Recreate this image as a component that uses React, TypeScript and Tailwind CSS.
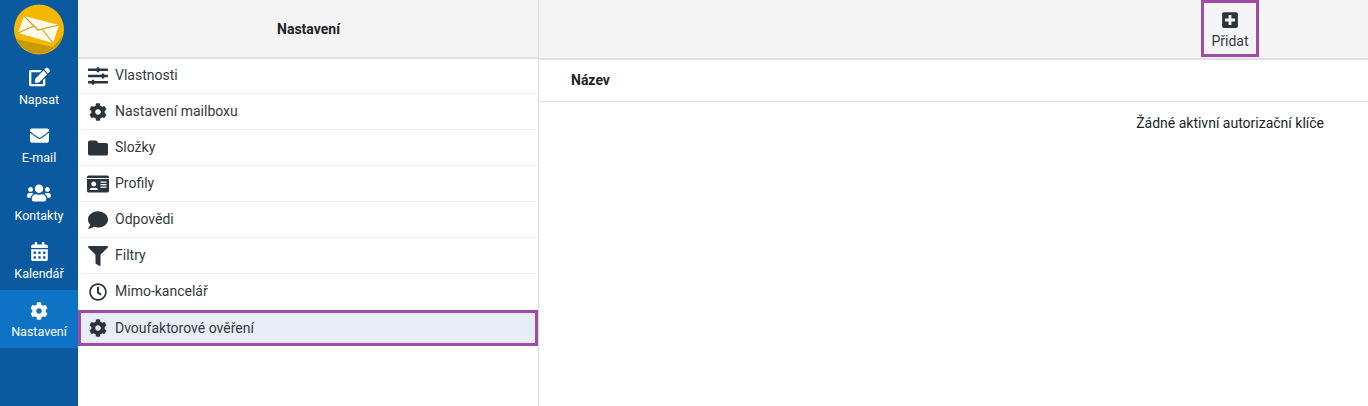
import React from "react";
import { FaEdit, FaEnvelope, FaUsers, FaCalendarAlt, FaCog, FaSlidersH, FaFolder, FaIdCard, FaComment, FaFilter, FaRegClock, FaPlusSquare } from "react-icons/fa";

const navItems = [
    { label: "Napsat", icon: FaEdit, iconClass: "h-[20px] w-[21px]" },
    { label: "E-mail", icon: FaEnvelope, iconClass: "h-[19px] w-[19px]" },
    { label: "Kontakty", icon: FaUsers, iconClass: "h-[24px] w-[24px]" },
    { label: "Kalendář", icon: FaCalendarAlt, iconClass: "h-[19px] w-[19px]" },
    { label: "Nastavení", icon: FaCog, iconClass: "mt-[3px] h-[18px] w-[18px]", active: true },
];

const sections = [
    { label: "Vlastnosti", icon: FaSlidersH, iconClass: "h-[20px] w-[20px]" },
    { label: "Nastavení mailboxu", icon: FaCog, iconClass: "h-[18px] w-[18px]" },
    { label: "Složky", icon: FaFolder, iconClass: "h-[20px] w-[20px]" },
    { label: "Profily", icon: FaIdCard, iconClass: "h-[20px] w-[22px]" },
    { label: "Odpovědi", icon: FaComment, iconClass: "h-[20px] w-[20px]" },
    { label: "Filtry", icon: FaFilter, iconClass: "h-[20px] w-[20px]" },
    { label: "Mimo-kancelář", icon: FaRegClock, iconClass: "h-[18px] w-[18px]" },
    { label: "Dvoufaktorové ověření", icon: FaCog, iconClass: "h-[18px] w-[18px]", active: true },
];

const Logo = () => (
    <svg width="50" height="51" viewBox="0 0 50 51">
        <circle cx="25" cy="25.5" r="25" fill="#f5b800" />
        <path d="M2 35 L39 43 L49 31 A25 25 0 0 1 2 35z" fill="#c99a06" />
        <path d="M10 12 45 21 39 39 4 29z" fill="#fff9e8" />
        <path d="M10 12 24 26 45 21M4 29 20 22M39 39 28 25" fill="none" stroke="#c9a227" strokeWidth="1.2" />
    </svg>
);

const App = () => {
    return (
        <div className="flex h-[406px] w-[1368px] overflow-hidden bg-white font-['Roboto',sans-serif] text-[14px] text-[#343a40]">
            <div className="flex w-[78px] shrink-0 flex-col bg-[#0b5a9f]">
                <div className="flex h-[58px] justify-center pt-[4px]">
                    <Logo />
                </div>
                {navItems.map((item) => (
                    <div
                        key={item.label}
                        className={`flex h-[58px] flex-col items-center pt-[9px] text-[12.5px] text-white ${item.active ? "bg-[#0f73c5]" : ""}`}
                    >
                        <span className="flex h-[20px] items-center justify-center">
                            <item.icon className={item.iconClass} />
                        </span>
                        <span className="mt-[5px] leading-[16px]">{item.label}</span>
                    </div>
                ))}
            </div>

            <div className="flex w-[461px] shrink-0 flex-col border-r border-[#d9dcdf]">
                <div className="flex h-[58px] items-center justify-center border-b border-[#dfe1e3] bg-[#f4f4f4] pl-[1px] pt-[1px] font-bold text-[#212529]">
                    Nastavení
                </div>
                {sections.map((item, i) => (
                    <div
                        key={item.label}
                        className={
                            item.active
                                ? "flex h-[36px] items-center gap-[8px] border-[3px] border-[#a04ca6] bg-[#e6edf5] pl-[8px]"
                                : `flex h-[36px] items-center gap-[8px] border-b border-[#f0f1f2] pl-[11px] ${i === 0 ? "border-t border-t-[#dfe1e3] pb-[1px]" : ""}`
                        }
                    >
                        <span className="flex w-[18px] justify-center">
                            <item.icon className={`shrink-0 text-[#2b333b] ${item.iconClass}`} />
                        </span>
                        <span>{item.label}</span>
                    </div>
                ))}
            </div>

            <div className="flex min-w-0 flex-1 flex-col">
                <div className="flex h-[60px] justify-end border-b-2 border-[#dfe1e3] bg-[#f4f4f4] pr-[109px]">
                    <div className="flex h-[57px] w-[58px] flex-col items-center border-[3px] border-[#a04ca6] pt-[8px]">
                        <FaPlusSquare className="h-[18px] w-[18px] text-[#2b333b]" />
                        <span className="mt-[4px] leading-[16px]">Přidat</span>
                    </div>
                </div>
                <div className="flex h-[42px] items-center border-b border-[#dee2e6] pl-[32px] font-bold text-[#212529]">
                    Název
                </div>
                <div className="flex justify-end pr-[44px] pt-[12px] leading-[18px] text-[#212529]">
                    Žádné aktivní autorizační klíče
                </div>
            </div>
        </div>
    );
};

export default App;
